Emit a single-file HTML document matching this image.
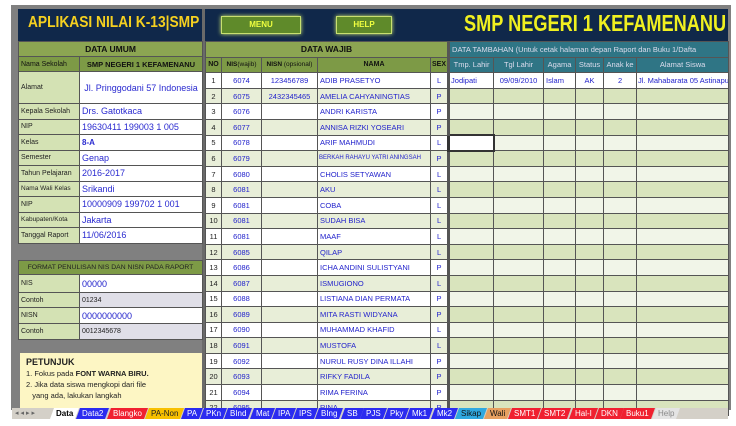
<!DOCTYPE html>
<html><head><meta charset="utf-8"><style>
*{box-sizing:border-box;margin:0;padding:0}
body{width:736px;height:426px;background:#fff;position:relative;overflow:hidden;font-family:"Liberation Sans",sans-serif;}
.a{position:absolute}
#frame{left:11px;top:5px;width:720px;height:405px;background:#808080}
#nav{left:18px;top:9px;width:710px;height:32px;background:#10284a}
.btn{top:16px;height:18px;background:#5f8a2a;border:1px solid #c8e070;box-shadow:0 0 4px #d8f070;color:#f0ff40;font-size:8px;font-weight:bold;text-align:center;line-height:16px}
table{border-collapse:collapse;table-layout:fixed}
td{border:1px solid #555;font-size:7.5px;white-space:nowrap;overflow:hidden;padding:0 2px;color:#2222cc}
#lt td.l{background:#d4e2b4;color:#222;font-size:7px}
#lt td.v{background:#fff;font-size:9px;color:#2a2ad0}
.gh{background:#8ca552;color:#111;font-weight:bold;text-align:center;font-size:8.5px}
.dh{background:#7d9a46;color:#111;font-size:7px}
#mt td{height:15.6px}
#mt tr.o td.w{background:#e8eed8}
#mt td.w{background:#fff}
#mt td.r{background:#f1f5e8}
#mt tr.o td.r{background:#d9e4bd}
.th{background:#2f7585;color:#dde;font-size:7.5px;text-align:center}
.c{text-align:center}
#tabs{left:12px;top:408px;width:716px;height:11px;background:#d4d0c8;display:flex;font-size:8px;line-height:11px;overflow:hidden}
#tabs span{padding:0 4px;margin-right:1px;color:#fff;transform:skewX(-20deg)}
#tabs span i{display:inline-block;font-style:normal;transform:skewX(20deg)}
</style></head><body>
<div class="a" id="frame"></div>
<div class="a" id="nav"></div>
<div class="a" style="left:28px;top:14px;font-size:16px;font-weight:bold;color:#f5d020;white-space:nowrap;transform:scaleX(0.86);transform-origin:left">APLIKASI NILAI K-13|SMP</div>
<div class="a btn" style="left:221px;width:80px">MENU</div>
<div class="a btn" style="left:336px;width:56px">HELP</div>
<div class="a" style="left:464px;top:10px;font-size:23px;font-weight:bold;color:#f0f020;white-space:nowrap;transform:scaleX(0.79);transform-origin:left">SMP NEGERI 1 KEFAMENANU</div>
<div class="a" style="left:202px;top:9px;width:3px;height:400px;background:#6a6a6a"></div>

<table id="lt" class="a" style="left:18px;top:41px;width:184px">
<colgroup><col style="width:61px"><col style="width:123px"></colgroup>
<tr style="height:15px"><td colspan="2" class="gh">DATA UMUM</td></tr>
<tr style="height:15px"><td class="dh">Nama Sekolah</td><td class="dh" style="font-weight:bold;font-size:7.5px;text-align:center">SMP NEGERI 1 KEFAMENANU</td></tr>
<tr style="height:32px"><td class="l">Alamat</td><td class="v" style="text-align:center">Jl. Pringgodani 57 Indonesia</td></tr>
<tr style="height:15.5px"><td class="l">Kepala Sekolah</td><td class="v">Drs. Gatotkaca</td></tr>
<tr style="height:15.5px"><td class="l">NIP</td><td class="v">19630411 199003 1 005</td></tr>
<tr style="height:15.5px"><td class="l">Kelas</td><td class="v" style="font-weight:bold;font-size:8px">8-A</td></tr>
<tr style="height:15.5px"><td class="l">Semester</td><td class="v">Genap</td></tr>
<tr style="height:15.5px"><td class="l">Tahun Pelajaran</td><td class="v">2016-2017</td></tr>
<tr style="height:15.5px"><td class="l" style="font-size:6.5px">Nama Wali Kelas</td><td class="v">Srikandi</td></tr>
<tr style="height:15.5px"><td class="l">NIP</td><td class="v">10000909 199702 1 001</td></tr>
<tr style="height:15.5px"><td class="l" style="font-size:6.5px">Kabupaten/Kota</td><td class="v">Jakarta</td></tr>
<tr style="height:15.5px"><td class="l">Tanggal Raport</td><td class="v">11/06/2016</td></tr>
</table>

<table id="ft" class="a" style="left:18px;top:260px;width:184px">
<colgroup><col style="width:61px"><col style="width:123px"></colgroup>
<tr style="height:14px"><td colspan="2" style="background:#7d9a46;color:#222;font-size:6.8px;text-align:center">FORMAT PENULISAN NIS DAN NISN PADA RAPORT</td></tr>
<tr style="height:18px"><td style="background:#d4e2b4;color:#222;font-size:7px">NIS</td><td style="background:#fff;font-size:9px">00000</td></tr>
<tr style="height:15px"><td style="background:#d4e2b4;color:#222;font-size:7px">Contoh</td><td style="background:#e0dfe8;color:#222;font-size:7px">01234</td></tr>
<tr style="height:16px"><td style="background:#d4e2b4;color:#222;font-size:7px">NISN</td><td style="background:#fff;font-size:9px">0000000000</td></tr>
<tr style="height:16px"><td style="background:#d4e2b4;color:#222;font-size:7px">Contoh</td><td style="background:#e0dfe8;color:#222;font-size:7px">0012345678</td></tr>
</table>

<div class="a" style="left:20px;top:353px;width:182px;height:56px;background:#fdf6c4;padding:4px 6px;font-size:7.5px;color:#222;line-height:11px;overflow:hidden">
<div style="font-weight:bold;font-size:9px">PETUNJUK</div>
<div>1. Fokus pada <b>FONT WARNA BIRU.</b></div>
<div>2. Jika data siswa mengkopi dari file</div>
<div>&nbsp;&nbsp;&nbsp;yang ada, lakukan langkah</div>
</div>

<table id="mt" class="a" style="left:205px;top:41px;width:523px">
<colgroup><col style="width:16px"><col style="width:40px"><col style="width:56px"><col style="width:113px"><col style="width:18px"><col style="width:45px"><col style="width:50px"><col style="width:32px"><col style="width:28px"><col style="width:33px"><col style="width:92px"></colgroup>
<tr><td colspan="5" class="gh" style="height:15px">DATA WAJIB</td><td colspan="6" class="th" style="text-align:left;border-left:3px solid #555">DATA TAMBAHAN (Untuk cetak halaman depan Raport dan Buku 1/Dafta</td></tr>
<tr><td class="dh c" style="font-weight:bold;padding:0">NO</td><td class="dh c" style="padding:0;font-size:6.5px"><b>NIS</b>(wajib)</td><td class="dh c" style="padding:0;font-size:6.5px"><b>NISN</b> (opsional)</td><td class="dh c" style="font-weight:bold">NAMA</td><td class="dh c" style="font-weight:bold;padding:0">SEX</td><td class="th" style="border-left:3px solid #555">Tmp. Lahir</td><td class="th">Tgl Lahir</td><td class="th">Agama</td><td class="th" style="padding:0">Status</td><td class="th" style="padding:0">Anak ke</td><td class="th">Alamat Siswa</td></tr>
<tr><td class="w c" style="color:#222">1</td><td class="w c">6074</td><td class="w c">123456789</td><td class="w">ADIB PRASETYO</td><td class="w c">L</td><td class="w" style="border-left:3px solid #555;padding:0 1px">Jodipati</td><td class="w c">09/09/2010</td><td class="w">Islam</td><td class="w c">AK</td><td class="w c">2</td><td class="w" style="padding:0 1px">Jl. Mahabarata 05 Astinapura</td></tr>
<tr class="o"><td class="w c" style="color:#222">2</td><td class="w c">6075</td><td class="w c">2432345465</td><td class="w">AMELIA CAHYANINGTIAS</td><td class="w c">P</td><td class="r" style="border-left:3px solid #555"></td><td class="r"></td><td class="r"></td><td class="r"></td><td class="r"></td><td class="r"></td></tr>
<tr><td class="w c" style="color:#222">3</td><td class="w c">6076</td><td class="w"></td><td class="w">ANDRI KARISTA</td><td class="w c">P</td><td class="r" style="border-left:3px solid #555"></td><td class="r"></td><td class="r"></td><td class="r"></td><td class="r"></td><td class="r"></td></tr>
<tr class="o"><td class="w c" style="color:#222">4</td><td class="w c">6077</td><td class="w"></td><td class="w">ANNISA RIZKI YOSEARI</td><td class="w c">P</td><td class="r" style="border-left:3px solid #555"></td><td class="r"></td><td class="r"></td><td class="r"></td><td class="r"></td><td class="r"></td></tr>
<tr><td class="w c" style="color:#222">5</td><td class="w c">6078</td><td class="w"></td><td class="w">ARIF MAHMUDI</td><td class="w c">L</td><td class="w" style="border:2px solid #333;border-left:3px solid #333"></td><td class="r"></td><td class="r"></td><td class="r"></td><td class="r"></td><td class="r"></td></tr>
<tr class="o"><td class="w c" style="color:#222">6</td><td class="w c">6079</td><td class="w"></td><td class="w" style="font-size:6px;padding:0 1px">BERKAH RAHAYU YATRI ANINGSAH</td><td class="w c">P</td><td class="r" style="border-left:3px solid #555"></td><td class="r"></td><td class="r"></td><td class="r"></td><td class="r"></td><td class="r"></td></tr>
<tr><td class="w c" style="color:#222">7</td><td class="w c">6080</td><td class="w"></td><td class="w">CHOLIS SETYAWAN</td><td class="w c">L</td><td class="r" style="border-left:3px solid #555"></td><td class="r"></td><td class="r"></td><td class="r"></td><td class="r"></td><td class="r"></td></tr>
<tr class="o"><td class="w c" style="color:#222">8</td><td class="w c">6081</td><td class="w"></td><td class="w">AKU</td><td class="w c">L</td><td class="r" style="border-left:3px solid #555"></td><td class="r"></td><td class="r"></td><td class="r"></td><td class="r"></td><td class="r"></td></tr>
<tr><td class="w c" style="color:#222">9</td><td class="w c">6081</td><td class="w"></td><td class="w">COBA</td><td class="w c">L</td><td class="r" style="border-left:3px solid #555"></td><td class="r"></td><td class="r"></td><td class="r"></td><td class="r"></td><td class="r"></td></tr>
<tr class="o"><td class="w c" style="color:#222;padding:0">10</td><td class="w c">6081</td><td class="w"></td><td class="w">SUDAH BISA</td><td class="w c">L</td><td class="r" style="border-left:3px solid #555"></td><td class="r"></td><td class="r"></td><td class="r"></td><td class="r"></td><td class="r"></td></tr>
<tr><td class="w c" style="color:#222;padding:0">11</td><td class="w c">6081</td><td class="w"></td><td class="w">MAAF</td><td class="w c">L</td><td class="r" style="border-left:3px solid #555"></td><td class="r"></td><td class="r"></td><td class="r"></td><td class="r"></td><td class="r"></td></tr>
<tr class="o"><td class="w c" style="color:#222;padding:0">12</td><td class="w c">6085</td><td class="w"></td><td class="w">QILAP</td><td class="w c">L</td><td class="r" style="border-left:3px solid #555"></td><td class="r"></td><td class="r"></td><td class="r"></td><td class="r"></td><td class="r"></td></tr>
<tr><td class="w c" style="color:#222;padding:0">13</td><td class="w c">6086</td><td class="w"></td><td class="w">ICHA ANDINI SULISTYANI</td><td class="w c">P</td><td class="r" style="border-left:3px solid #555"></td><td class="r"></td><td class="r"></td><td class="r"></td><td class="r"></td><td class="r"></td></tr>
<tr class="o"><td class="w c" style="color:#222;padding:0">14</td><td class="w c">6087</td><td class="w"></td><td class="w">ISMUGIONO</td><td class="w c">L</td><td class="r" style="border-left:3px solid #555"></td><td class="r"></td><td class="r"></td><td class="r"></td><td class="r"></td><td class="r"></td></tr>
<tr><td class="w c" style="color:#222;padding:0">15</td><td class="w c">6088</td><td class="w"></td><td class="w">LISTIANA DIAN PERMATA</td><td class="w c">P</td><td class="r" style="border-left:3px solid #555"></td><td class="r"></td><td class="r"></td><td class="r"></td><td class="r"></td><td class="r"></td></tr>
<tr class="o"><td class="w c" style="color:#222;padding:0">16</td><td class="w c">6089</td><td class="w"></td><td class="w">MITA RASTI WIDYANA</td><td class="w c">P</td><td class="r" style="border-left:3px solid #555"></td><td class="r"></td><td class="r"></td><td class="r"></td><td class="r"></td><td class="r"></td></tr>
<tr><td class="w c" style="color:#222;padding:0">17</td><td class="w c">6090</td><td class="w"></td><td class="w">MUHAMMAD KHAFID</td><td class="w c">L</td><td class="r" style="border-left:3px solid #555"></td><td class="r"></td><td class="r"></td><td class="r"></td><td class="r"></td><td class="r"></td></tr>
<tr class="o"><td class="w c" style="color:#222;padding:0">18</td><td class="w c">6091</td><td class="w"></td><td class="w">MUSTOFA</td><td class="w c">L</td><td class="r" style="border-left:3px solid #555"></td><td class="r"></td><td class="r"></td><td class="r"></td><td class="r"></td><td class="r"></td></tr>
<tr><td class="w c" style="color:#222;padding:0">19</td><td class="w c">6092</td><td class="w"></td><td class="w">NURUL RUSY DINA ILLAHI</td><td class="w c">P</td><td class="r" style="border-left:3px solid #555"></td><td class="r"></td><td class="r"></td><td class="r"></td><td class="r"></td><td class="r"></td></tr>
<tr class="o"><td class="w c" style="color:#222;padding:0">20</td><td class="w c">6093</td><td class="w"></td><td class="w">RIFKY FADILA</td><td class="w c">P</td><td class="r" style="border-left:3px solid #555"></td><td class="r"></td><td class="r"></td><td class="r"></td><td class="r"></td><td class="r"></td></tr>
<tr><td class="w c" style="color:#222;padding:0">21</td><td class="w c">6094</td><td class="w"></td><td class="w">RIMA FERINA</td><td class="w c">P</td><td class="r" style="border-left:3px solid #555"></td><td class="r"></td><td class="r"></td><td class="r"></td><td class="r"></td><td class="r"></td></tr>
<tr class="o"><td class="w c" style="color:#222;padding:0">22</td><td class="w c">6095</td><td class="w"></td><td class="w">RINA</td><td class="w c">P</td><td class="r" style="border-left:3px solid #555"></td><td class="r"></td><td class="r"></td><td class="r"></td><td class="r"></td><td class="r"></td></tr>
</table>

<div class="a" id="tabs">
<div style="width:40px;color:#666;font-size:7px;padding-left:3px;letter-spacing:2px">◂◂▸▸</div>
<span style="background:#fff;color:#000;font-weight:bold"><i>Data</i></span>
<span style="background:#2b2bf0"><i>Data2</i></span>
<span style="background:#f02030"><i>Blangko</i></span>
<span style="background:#f8c000;color:#222"><i>PA-Non</i></span>
<span style="background:#2b2bf0"><i>PA</i></span>
<span style="background:#2b2bf0"><i>PKn</i></span>
<span style="background:#2b2bf0"><i>BInd</i></span>
<span style="background:#2b2bf0"><i>Mat</i></span>
<span style="background:#2b2bf0"><i>IPA</i></span>
<span style="background:#2b2bf0"><i>IPS</i></span>
<span style="background:#2b2bf0"><i>BIng</i></span>
<span style="background:#2b2bf0"><i>SB</i></span>
<span style="background:#2b2bf0"><i>PJS</i></span>
<span style="background:#2b2bf0"><i>Pky</i></span>
<span style="background:#2b2bf0"><i>Mk1</i></span>
<span style="background:#2b2bf0"><i>Mk2</i></span>
<span style="background:#30a8e0;color:#111"><i>Sikap</i></span>
<span style="background:#e8a060;color:#111"><i>Wali</i></span>
<span style="background:#f02030"><i>SMT1</i></span>
<span style="background:#f02030"><i>SMT2</i></span>
<span style="background:#f02030"><i>Hal-I</i></span>
<span style="background:#f02030"><i>DKN</i></span>
<span style="background:#f02030"><i>Buku1</i></span>
<span style="background:#e4e4e4;color:#888"><i>Help</i></span>
</div>
</body></html>
